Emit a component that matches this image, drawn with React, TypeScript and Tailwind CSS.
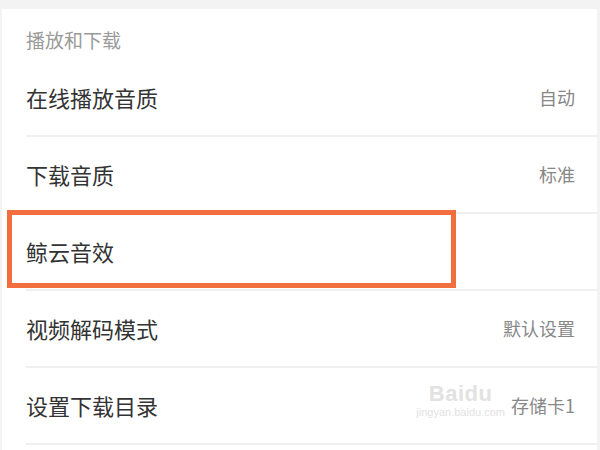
const rows = [
  { label: "在线播放音质", value: "自动" },
  { label: "下载音质", value: "标准" },
  { label: "鲸云音效", value: "", marked: true },
  { label: "视频解码模式", value: "默认设置" },
  { label: "设置下载目录", value: "存储卡1", watermark: true },
];

export default function App() {
  return (
    <div
      className="w-[600px] h-[450px] overflow-hidden bg-[#f3f3f3] flex flex-col"
      style={{ fontFamily: '"Noto Sans CJK SC", "Noto Sans", sans-serif' }}
    >
      <div className="h-[9px] shrink-0" />
      <div className="flex-1 bg-white ml-[2px] mr-[3px]">
        <div className="pl-[24px] pt-[21px] pb-[10px] text-[19px] leading-[20px] text-[#9a9a9a]">
          播放和下载
        </div>
        {rows.map((row) => (
          <div key={row.label} className="relative pl-[24px]">
            <div className="h-[75px] flex items-center justify-between pr-[22px]">
              <span className="text-[22px] text-[#333333]">{row.label}</span>
              <span className="text-[18px] text-[#888888]">{row.value}</span>
            </div>
            <div className="h-[2px] bg-[#efefef]" />
            {row.marked && (
              <div className="absolute left-[5px] top-[-4px] w-[449px] h-[78px] border-[5px] border-[#f26e3f]" />
            )}
            {row.watermark && (
              <div className="absolute right-[92px] top-[14px] flex flex-col items-center text-[#e2e2e2] pointer-events-none">
                <span className="text-[22px] leading-[24px] font-bold tracking-wide" style={{ fontFamily: '"Liberation Sans", sans-serif' }}>
                  Baidu
                </span>
                <span className="text-[11px] leading-[13px]" style={{ fontFamily: '"Liberation Sans", sans-serif' }}>
                  jingyan.baidu.com
                </span>
              </div>
            )}
          </div>
        ))}
      </div>
    </div>
  );
}
